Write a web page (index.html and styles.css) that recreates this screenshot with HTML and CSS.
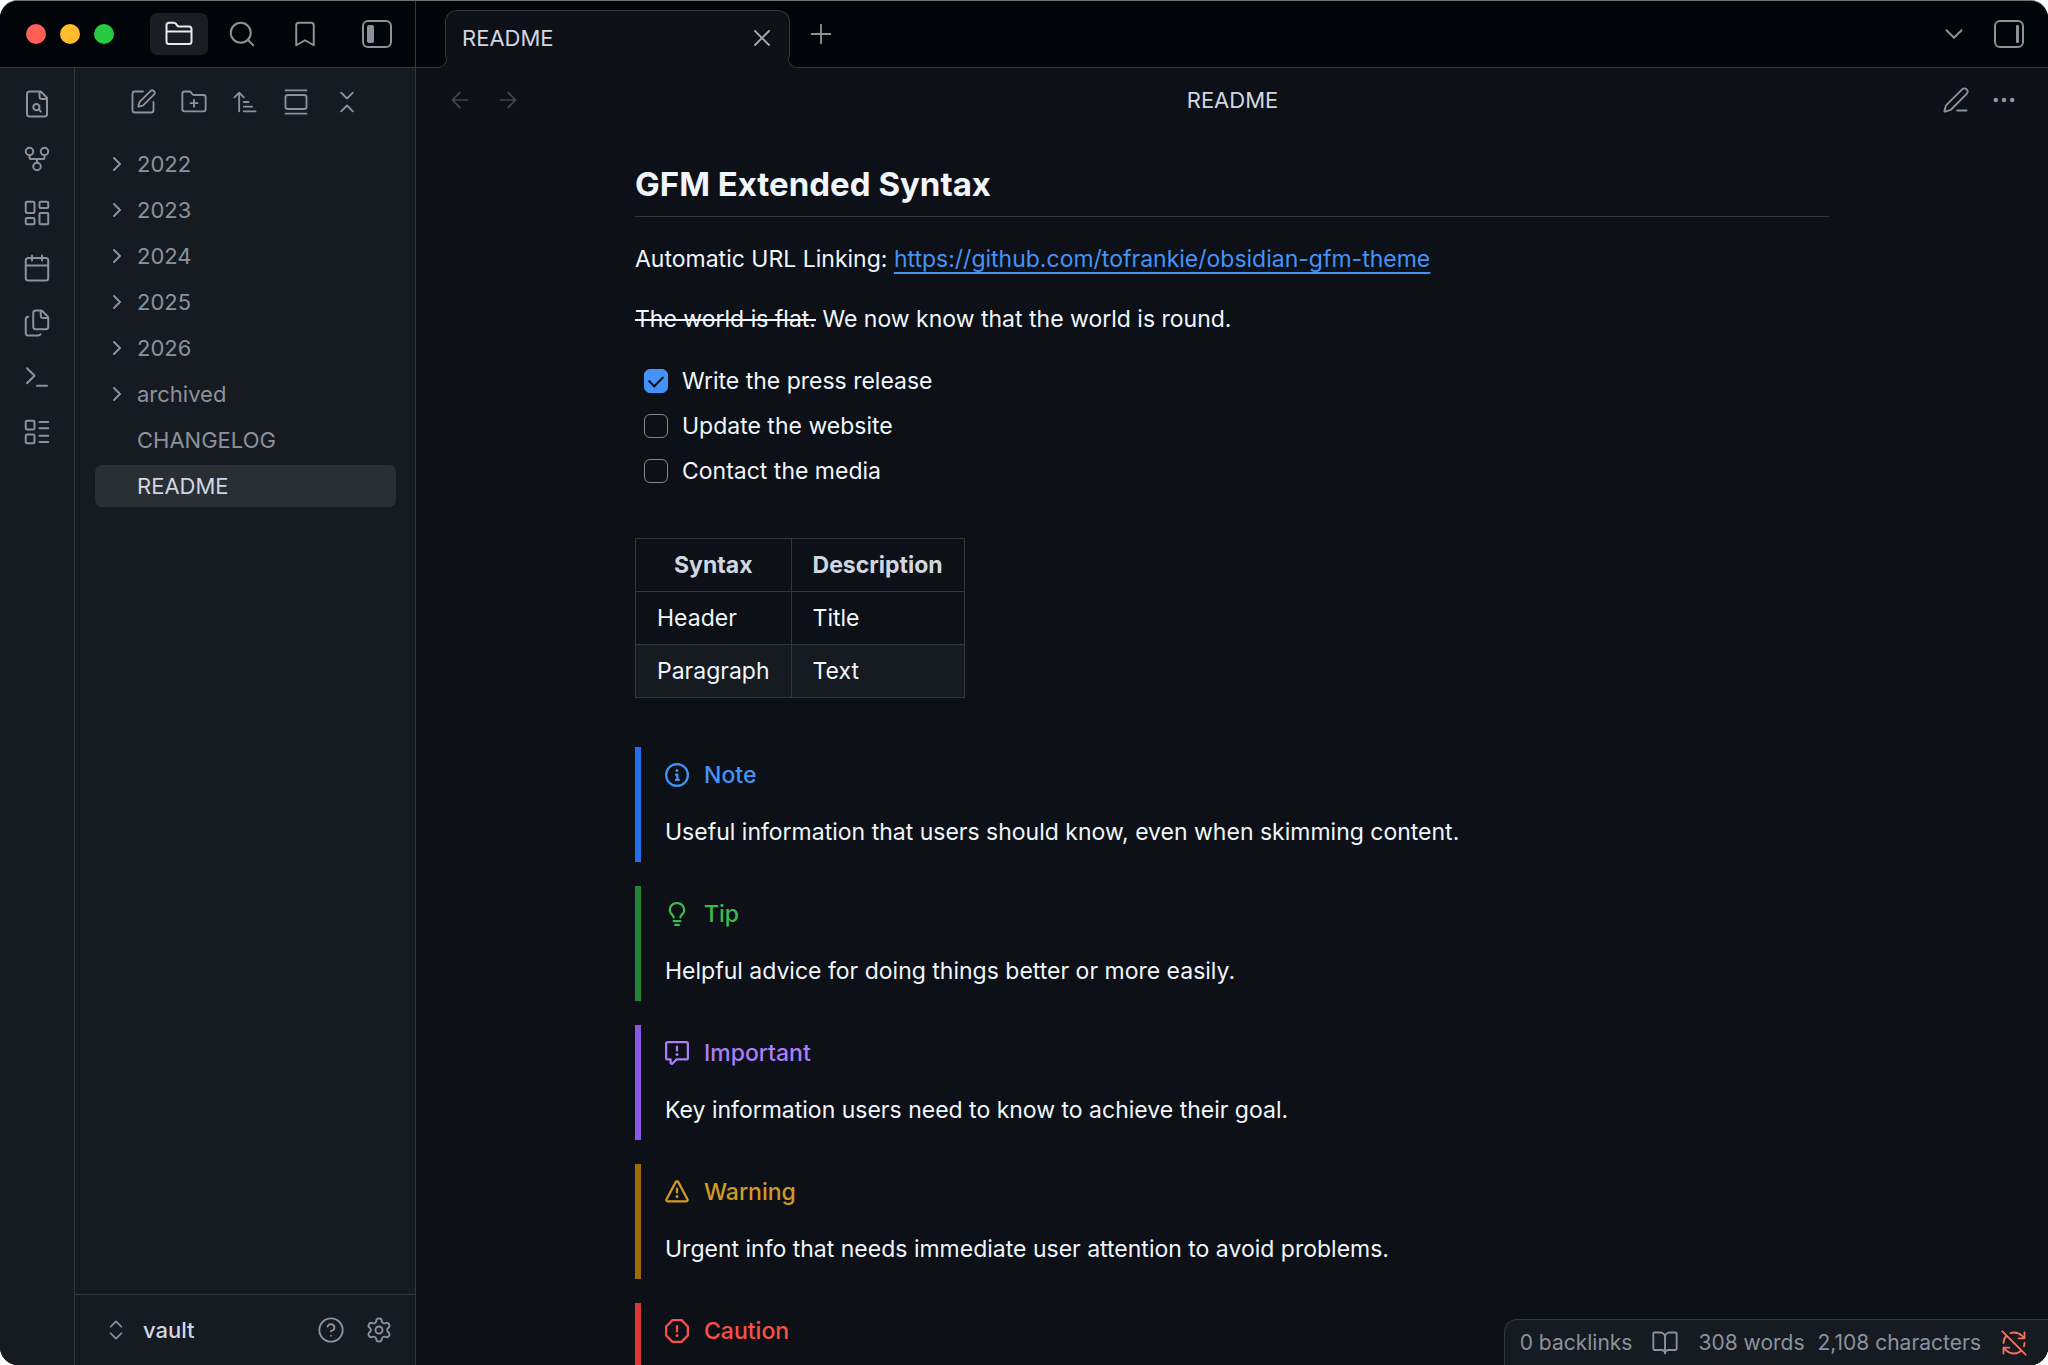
FILE: index.html
```html
<!DOCTYPE html>
<html lang="en">
<head>
<meta charset="utf-8">
<title>README - vault</title>
<link rel="stylesheet" href="styles.css">
</head>
<body>
<svg class="sprite" aria-hidden="true">
  <symbol id="folder" viewBox="0 0 24 24"><path d="M20 20a2 2 0 0 0 2-2V8a2 2 0 0 0-2-2h-7.900a2 2 0 0 1-1.690-.9L9.600 3.900A2 2 0 0 0 7.930 3H4a2 2 0 0 0-2 2v13a2 2 0 0 0 2 2ZM2 10h20"/></symbol>
  <symbol id="search" viewBox="0 0 24 24"><circle cx="11" cy="11" r="8"/><path d="m21 21-4.300-4.300"/></symbol>
  <symbol id="bookmark" viewBox="0 0 24 24"><path d="m19 21-7-4-7 4V5a2 2 0 0 1 2-2h10a2 2 0 0 1 2 2z"/></symbol>
  <symbol id="panel-left" viewBox="0 0 32 30"><rect x="2" y="2" width="28" height="26" rx="5"/><rect class="solid" x="6" y="6" width="7" height="18" rx="2"/></symbol>
  <symbol id="panel-right" viewBox="0 0 32 30"><rect x="2" y="2" width="28" height="26" rx="5"/><rect class="solid" x="23" y="6" width="3" height="18" rx="1"/></symbol>
  <symbol id="file-search" viewBox="0 0 24 24"><path d="M15 2H6a2 2 0 0 0-2 2v16a2 2 0 0 0 2 2h12a2 2 0 0 0 2-2V7ZM14 2v4a2 2 0 0 0 2 2h4M13.300 16.300 15 18"/><circle cx="11.500" cy="14.500" r="2.500"/></symbol>
  <symbol id="graph" viewBox="0 0 24 24"><circle cx="12" cy="18" r="3"/><circle cx="6" cy="6" r="3"/><circle cx="18" cy="6" r="3"/><path d="M18 9v2c0 .6-.4 1-1 1H7c-.6 0-1-.4-1-1V9M12 12v3"/></symbol>
  <symbol id="dashboard" viewBox="0 0 24 24"><rect x="3" y="3" width="7" height="9" rx="1"/><rect x="14" y="3" width="7" height="5" rx="1"/><rect x="14" y="12" width="7" height="9" rx="1"/><rect x="3" y="16" width="7" height="5" rx="1"/></symbol>
  <symbol id="calendar" viewBox="0 0 24 24"><path d="M8 2v4M16 2v4M3 10h18"/><rect x="3" y="4" width="18" height="18" rx="2"/></symbol>
  <symbol id="files" viewBox="0 0 24 24"><path d="M15 2a2 2 0 0 1 1.414.586l4 4A2 2 0 0 1 21 8v7a2 2 0 0 1-2 2h-8a2 2 0 0 1-2-2V4a2 2 0 0 1 2-2zM15 2v4a2 2 0 0 0 2 2h4M5 7a2 2 0 0 0-2 2v11a2 2 0 0 0 2 2h8a2 2 0 0 0 1.732-1"/></symbol>
  <symbol id="terminal" viewBox="0 0 24 24"><path d="m4 17 6-6-6-6M12 19h8"/></symbol>
  <symbol id="list" viewBox="0 0 24 24"><rect x="3" y="3" width="7" height="7" rx="1"/><rect x="3" y="14" width="7" height="7" rx="1"/><path d="M14 4h7M14 9h7M14 15h7M14 20h7"/></symbol>
  <symbol id="new-note" viewBox="0 0 24 24"><path d="M12 3H5a2 2 0 0 0-2 2v14a2 2 0 0 0 2 2h14a2 2 0 0 0 2-2v-7M18.375 2.625a1 1 0 0 1 3 3l-9.013 9.014a2 2 0 0 1-.853.505l-2.873.84a.5.5 0 0 1-.62-.62l.84-2.873a2 2 0 0 1 .506-.852z"/></symbol>
  <symbol id="new-folder" viewBox="0 0 24 24"><path d="M12 10v6M9 13h6M20 20a2 2 0 0 0 2-2V8a2 2 0 0 0-2-2h-7.900a2 2 0 0 1-1.690-.9L9.600 3.900A2 2 0 0 0 7.930 3H4a2 2 0 0 0-2 2v13a2 2 0 0 0 2 2Z"/></symbol>
  <symbol id="sort" viewBox="0 0 24 24"><path d="m3 8 4-4 4 4M7 4v16M11 12h4M11 16h7M11 20h10"/></symbol>
  <symbol id="gallery" viewBox="0 0 24 24"><path d="M3 2h18M3 22h18"/><rect x="3" y="6" width="18" height="12" rx="2"/></symbol>
  <symbol id="collapse" viewBox="0 0 24 24"><path d="m7 20 5-5 5 5M7 4l5 5 5-5"/></symbol>
  <symbol id="expand" viewBox="0 0 24 24"><path d="m7 15 5 5 5-5M7 9l5-5 5 5"/></symbol>
  <symbol id="chevron-right" viewBox="0 0 24 24"><path d="m9 18 6-6-6-6"/></symbol>
  <symbol id="chevron-down" viewBox="0 0 24 24"><path d="m6 9 6 6 6-6"/></symbol>
  <symbol id="close" viewBox="0 0 24 24"><path d="M18 6 6 18M6 6l12 12"/></symbol>
  <symbol id="plus" viewBox="0 0 24 24"><path d="M4 12h16M12 4v16"/></symbol>
  <symbol id="arrow-left" viewBox="0 0 24 24"><path d="m12 19-7-7 7-7M19 12H5"/></symbol>
  <symbol id="arrow-right" viewBox="0 0 24 24"><path d="M5 12h14M12 5l7 7-7 7"/></symbol>
  <symbol id="pen" viewBox="0 0 24 24"><path d="M13 21h8M21.174 6.812a1 1 0 0 0-3.986-3.987L3.842 16.174a2 2 0 0 0-.5.83l-1.321 4.352a.5.5 0 0 0 .623.622l4.353-1.320a2 2 0 0 0 .83-.497z"/></symbol>
  <symbol id="more" viewBox="0 0 24 24"><circle cx="12" cy="12" r="1"/><circle cx="19" cy="12" r="1"/><circle cx="5" cy="12" r="1"/></symbol>
  <symbol id="help" viewBox="0 0 24 24"><circle cx="12" cy="12" r="10"/><path d="M9.090 9a3 3 0 0 1 5.830 1c0 2-3 3-3 3M12 17h.01"/></symbol>
  <symbol id="settings" viewBox="0 0 24 24"><path d="M9.671 4.136a2.340 2.340 0 0 1 4.659 0 2.340 2.340 0 0 0 3.319 1.915 2.340 2.340 0 0 1 2.330 4.033 2.340 2.340 0 0 0 0 3.831 2.340 2.340 0 0 1-2.330 4.033 2.340 2.340 0 0 0-3.319 1.915 2.340 2.340 0 0 1-4.659 0 2.340 2.340 0 0 0-3.320-1.915 2.340 2.340 0 0 1-2.330-4.033 2.340 2.340 0 0 0 0-3.831A2.340 2.340 0 0 1 6.350 6.051a2.340 2.340 0 0 0 3.319-1.915"/><circle cx="12" cy="12" r="3"/></symbol>
  <symbol id="book" viewBox="0 0 24 24"><path d="M12 7v14M3 18a1 1 0 0 1-1-1V4a1 1 0 0 1 1-1h5a4 4 0 0 1 4 4 4 4 0 0 1 4-4h5a1 1 0 0 1 1 1v13a1 1 0 0 1-1 1h-6a3 3 0 0 0-3 3 3 3 0 0 0-3-3z"/></symbol>
  <symbol id="sync-off" viewBox="0 0 24 24"><path d="M21 8l-2.260-2.260A9.750 9.750 0 0 0 12 3c-1 0-1.970.16-2.870.47M8 16H3v5M3 12c0-2.490 1-4.740 2.640-6.360M3 16l2.260 2.260A9.750 9.750 0 0 0 12 21c2.490 0 4.740-1 6.360-2.640M21 12c0 1-.16 1.970-.47 2.870M21 3v5h-5M22 22 2 2"/></symbol>
  <symbol id="note" viewBox="0 0 16 16"><path d="M0 8a8 8 0 1 1 16 0A8 8 0 0 1 0 8Zm8-6.500a6.500 6.500 0 1 0 0 13 6.500 6.500 0 0 0 0-13ZM6.500 7.750A.75.75 0 0 1 7.250 7h1a.75.75 0 0 1 .75.75v2.750h.25a.75.75 0 0 1 0 1.500h-2a.75.75 0 0 1 0-1.500h.25v-2h-.25a.75.75 0 0 1-.75-.75ZM8 6a1 1 0 1 1 0-2 1 1 0 0 1 0 2Z"/></symbol>
  <symbol id="tip" viewBox="0 0 16 16"><path d="M8 1.500c-2.363 0-4 1.690-4 3.750 0 .984.424 1.625.984 2.304l.214.253c.223.264.47.556.673.848.284.411.537.896.621 1.490a.75.75 0 0 1-1.484.211c-.04-.282-.163-.547-.37-.847a8.456 8.456 0 0 0-.542-.68c-.084-.1-.173-.205-.268-.32C3.201 7.750 2.500 6.766 2.500 5.250 2.500 2.310 4.863 0 8 0s5.500 2.310 5.500 5.250c0 1.516-.701 2.500-1.328 3.259-.095.115-.184.220-.268.319-.207.245-.383.453-.541.681-.208.300-.330.565-.370.847a.751.751 0 0 1-1.485-.212c.084-.593.337-1.078.621-1.489.203-.292.450-.584.673-.848.075-.088.147-.173.213-.253.561-.679.985-1.320.985-2.304 0-2.060-1.637-3.750-4-3.750ZM5.750 12h4.500a.75.75 0 0 1 0 1.500h-4.500a.75.75 0 0 1 0-1.500ZM6 15.250a.75.75 0 0 1 .75-.75h2.500a.75.75 0 0 1 0 1.500h-2.500a.75.75 0 0 1-.75-.75Z"/></symbol>
  <symbol id="important" viewBox="0 0 16 16"><path d="M0 1.750C0 .784.784 0 1.750 0h12.500C15.216 0 16 .784 16 1.750v9.500A1.750 1.750 0 0 1 14.250 13H8.060l-2.573 2.573A1.458 1.458 0 0 1 3 14.543V13H1.750A1.750 1.750 0 0 1 0 11.250Zm1.750-.25a.25.25 0 0 0-.25.25v9.500c0 .138.112.25.25.25h2a.75.75 0 0 1 .75.75v2.190l2.720-2.720a.749.749 0 0 1 .53-.22h6.500a.25.25 0 0 0 .25-.25v-9.500a.25.25 0 0 0-.25-.25Zm7 2.250v2.500a.75.75 0 0 1-1.500 0v-2.500a.75.75 0 0 1 1.500 0ZM9 9a1 1 0 1 1-2 0 1 1 0 0 1 2 0Z"/></symbol>
  <symbol id="warning" viewBox="0 0 16 16"><path d="M6.457 1.047c.659-1.234 2.427-1.234 3.086 0l6.082 11.378A1.750 1.750 0 0 1 14.082 15H1.918a1.750 1.750 0 0 1-1.543-2.575Zm1.763.707a.25.25 0 0 0-.44 0L1.698 13.132a.25.25 0 0 0 .22.368h12.164a.25.25 0 0 0 .22-.368Zm.53 3.996v2.500a.75.75 0 0 1-1.500 0v-2.500a.75.75 0 0 1 1.500 0ZM9 11a1 1 0 1 1-2 0 1 1 0 0 1 2 0Z"/></symbol>
  <symbol id="caution" viewBox="0 0 16 16"><path d="M4.470.22A.749.749 0 0 1 5 0h6c.199 0 .389.079.53.22l4.250 4.250c.141.140.220.331.220.530v6a.749.749 0 0 1-.22.53l-4.250 4.250A.749.749 0 0 1 11 16H5a.749.749 0 0 1-.53-.22L.22 11.530A.749.749 0 0 1 0 11V5c0-.199.079-.389.22-.53Zm.84 1.280L1.500 5.310v5.380l3.810 3.810h5.380l3.810-3.810V5.310L10.690 1.500ZM8 4a.75.75 0 0 1 .75.75v3.500a.75.75 0 0 1-1.500 0v-3.500A.75.75 0 0 1 8 4Zm0 8a1 1 0 1 1 0-2 1 1 0 0 1 0 2Z"/></symbol>
</svg>

<div class="window">
  <header class="titlebar">
    <div class="titlebar-left">
      <div class="lights"><span class="light red"></span><span class="light yellow"></span><span class="light green"></span></div>
      <button class="side-tab active" aria-label="Files"><svg class="icon"><use href="#folder"/></svg></button>
      <button class="side-tab" aria-label="Search"><svg class="icon"><use href="#search"/></svg></button>
      <button class="side-tab" aria-label="Bookmarks"><svg class="icon"><use href="#bookmark"/></svg></button>
      <button class="toggle" aria-label="Toggle left sidebar"><svg class="panel-icon"><use href="#panel-left"/></svg></button>
    </div>
    <div class="tabs">
      <div class="tab"><span>README</span><button aria-label="Close tab"><svg class="icon medium"><use href="#close"/></svg></button></div>
      <button class="new-tab" aria-label="New tab"><svg class="icon medium"><use href="#plus"/></svg></button>
      <div class="tabs-end">
        <button aria-label="Tab list"><svg class="icon"><use href="#chevron-down"/></svg></button>
        <button aria-label="Toggle right sidebar"><svg class="panel-icon"><use href="#panel-right"/></svg></button>
      </div>
    </div>
  </header>

  <div class="workspace">
    <nav class="ribbon" aria-label="Ribbon">
      <button aria-label="Quick switcher"><svg class="icon"><use href="#file-search"/></svg></button>
      <button aria-label="Graph view"><svg class="icon"><use href="#graph"/></svg></button>
      <button aria-label="Canvas"><svg class="icon"><use href="#dashboard"/></svg></button>
      <button aria-label="Daily note"><svg class="icon"><use href="#calendar"/></svg></button>
      <button aria-label="Templates"><svg class="icon"><use href="#files"/></svg></button>
      <button aria-label="Command palette"><svg class="icon"><use href="#terminal"/></svg></button>
      <button aria-label="Bases"><svg class="icon"><use href="#list"/></svg></button>
    </nav>

    <aside class="sidebar">
      <div class="nav-buttons">
        <button aria-label="New note"><svg class="icon medium"><use href="#new-note"/></svg></button>
        <button aria-label="New folder"><svg class="icon medium"><use href="#new-folder"/></svg></button>
        <button aria-label="Sort order"><svg class="icon medium"><use href="#sort"/></svg></button>
        <button aria-label="Reveal current file"><svg class="icon medium"><use href="#gallery"/></svg></button>
        <button aria-label="Collapse all"><svg class="icon medium"><use href="#collapse"/></svg></button>
      </div>
      <div class="files">
        <button class="file"><svg class="icon chevron"><use href="#chevron-right"/></svg>2022</button>
        <button class="file"><svg class="icon chevron"><use href="#chevron-right"/></svg>2023</button>
        <button class="file"><svg class="icon chevron"><use href="#chevron-right"/></svg>2024</button>
        <button class="file"><svg class="icon chevron"><use href="#chevron-right"/></svg>2025</button>
        <button class="file"><svg class="icon chevron"><use href="#chevron-right"/></svg>2026</button>
        <button class="file"><svg class="icon chevron"><use href="#chevron-right"/></svg>archived</button>
        <button class="file note">CHANGELOG</button>
        <button class="file note current">README</button>
      </div>
      <div class="vault">
        <button class="vault-name"><svg class="icon small"><use href="#expand"/></svg>vault</button>
        <button aria-label="Help"><svg class="icon medium"><use href="#help"/></svg></button>
        <button aria-label="Settings"><svg class="icon medium"><use href="#settings"/></svg></button>
      </div>
    </aside>

    <main class="main">
      <div class="view-header">
        <div class="history">
          <button aria-label="Back"><svg class="icon small"><use href="#arrow-left"/></svg></button>
          <button aria-label="Forward"><svg class="icon small"><use href="#arrow-right"/></svg></button>
        </div>
        <div class="view-title">README</div>
        <div class="view-actions">
          <button aria-label="Edit"><svg class="icon medium"><use href="#pen"/></svg></button>
          <button aria-label="More options"><svg class="icon medium dots"><use href="#more"/></svg></button>
        </div>
      </div>

      <article class="document">
        <h2>GFM Extended Syntax</h2>
        <p>Automatic URL Linking: <a href="https://github.com/tofrankie/obsidian-gfm-theme">https://github.com/tofrankie/obsidian-gfm-theme</a></p>
        <p><del>The world is flat.</del> We now know that the world is round.</p>
        <ul class="tasks">
          <li><label><input type="checkbox" checked>Write the press release</label></li>
          <li><label><input type="checkbox">Update the website</label></li>
          <li><label><input type="checkbox">Contact the media</label></li>
        </ul>
        <table>
          <thead><tr><th>Syntax</th><th>Description</th></tr></thead>
          <tbody>
            <tr><td>Header</td><td>Title</td></tr>
            <tr><td>Paragraph</td><td>Text</td></tr>
          </tbody>
        </table>
        <section class="callout note-callout"><h3><svg class="octicon"><use href="#note"/></svg>Note</h3><p>Useful information that users should know, even when skimming content.</p></section>
        <section class="callout tip-callout"><h3><svg class="octicon"><use href="#tip"/></svg>Tip</h3><p>Helpful advice for doing things better or more easily.</p></section>
        <section class="callout important-callout"><h3><svg class="octicon"><use href="#important"/></svg>Important</h3><p>Key information users need to know to achieve their goal.</p></section>
        <section class="callout warning-callout"><h3><svg class="octicon"><use href="#warning"/></svg>Warning</h3><p>Urgent info that needs immediate user attention to avoid problems.</p></section>
        <section class="callout caution-callout"><h3><svg class="octicon"><use href="#caution"/></svg>Caution</h3></section>
      </article>

      <footer class="status">
        <span>0 backlinks</span>
        <svg class="icon medium"><use href="#book"/></svg>
        <span class="words">308 words</span>
        <span>2,108 characters</span>
        <svg class="icon medium sync"><use href="#sync-off"/></svg>
      </footer>
    </main>
  </div>
</div>
</body>
</html>
```
FILE: styles.css
```css
:root {
  --inset: #010409;
  --panel: #161b22;
  --page: #0d1117;
  --line: #33383e;
  --hover: #2a2f34;
  --text: #f0f6fc;
  --text-soft: #d1d7e0;
  --muted: #8c929b;
  --accent: #4493f8;
}

* { box-sizing: border-box; }

body {
  margin: 0;
  background: #fff;
  color: var(--text);
  font-family: Inter, "Liberation Sans", sans-serif;
  font-size: 23px;
  line-height: 36px;
}

button {
  display: flex;
  align-items: center;
  justify-content: center;
  padding: 0;
  border: 0;
  background: none;
  color: inherit;
  font: inherit;
}

.sprite { position: absolute; width: 0; height: 0; }

.icon, .panel-icon {
  display: block;
  flex: none;
  fill: none;
  stroke: currentColor;
  stroke-width: 1.6;
  stroke-linecap: round;
  stroke-linejoin: round;
}
.icon { width: 30px; height: 30px; }
.icon.medium { width: 28px; height: 28px; }
.icon.small { width: 26px; height: 26px; }
.panel-icon { width: 32px; height: 30px; stroke-width: 2; }
.solid { fill: currentColor; stroke: none; }
.octicon { width: 24px; height: 24px; fill: currentColor; }

.window {
  display: flex;
  flex-direction: column;
  height: 100vh;
  overflow: hidden;
  border-top: 1px solid #6b7078;
  border-radius: 18px;
  background: var(--page);
}

/* Title bar */
.titlebar {
  display: flex;
  flex: none;
  height: 67px;
  border-bottom: 1px solid var(--line);
  background: var(--inset);
  color: var(--muted);
}
.titlebar-left {
  display: flex;
  align-items: center;
  width: 416px;
  padding-left: 26px;
  border-right: 1px solid var(--line);
}
.lights { display: flex; gap: 14px; margin-right: 36px; }
.light { width: 20px; height: 20px; border-radius: 50%; }
.red { background: #ff5f57; }
.yellow { background: #febc2e; }
.green { background: #28c840; }
.side-tab { width: 58px; height: 42px; margin-right: 5px; border-radius: 7px; }
.side-tab.active { background: #1a1e24; color: #e6e9ee; }
.toggle { margin-left: 22px; }

.tabs { display: flex; flex: 1; align-items: center; padding-left: 29px; }
.tab {
  position: relative;
  display: flex;
  align-self: flex-end;
  align-items: center;
  justify-content: space-between;
  width: 345px;
  height: 58px;
  margin-bottom: -1px;
  padding: 0 13px 3px 16px;
  border: 1px solid var(--line);
  border-bottom: 0;
  border-radius: 12px 12px 0 0;
  background: var(--page);
  color: var(--text-soft);
  font-size: 22px;
}
/* Outward curves that join the tab to the bar's lower edge */
.tab::before, .tab::after {
  content: "";
  position: absolute;
  bottom: 0;
  width: 10px;
  height: 10px;
  border-bottom: 1px solid var(--line);
  background: var(--inset);
  box-shadow: 0 0 0 5px var(--page);
  clip-path: inset(0);
}
.tab::before { left: -10px; border-right: 1px solid var(--line); border-bottom-right-radius: 9px; }
.tab::after { right: -10px; border-left: 1px solid var(--line); border-bottom-left-radius: 9px; }
.tab button { color: #a5abb3; }
.new-tab { margin-left: 17px; }
.tabs-end { display: flex; align-items: center; gap: 24px; margin-left: auto; padding-right: 23px; }

/* Panels */
.workspace {
  display: flex;
  flex: 1;
  min-height: 0;
  background: linear-gradient(90deg, var(--panel) 74px, var(--page) 74px);
}
.ribbon {
  display: grid;
  flex: none;
  grid-template-rows: repeat(7, 1fr);
  width: 74px;
  height: 382px;
  margin-top: 9px;
  color: var(--muted);
}
.sidebar {
  display: flex;
  flex: none;
  flex-direction: column;
  width: 342px;
  border: solid var(--line);
  border-width: 0 1px;
  background: var(--panel);
  color: var(--muted);
  font-size: 22px;
}
.nav-buttons { display: flex; justify-content: center; gap: 23px; padding: 20px 0 27px; }
.files { display: flex; flex: 1; flex-direction: column; gap: 4px; padding: 0 19px 0 20px; }
.file {
  justify-content: flex-start;
  height: 42px;
  padding-left: 10px;
  border-radius: 7px;
}
.file.note { padding-left: 42px; }
.file.current { background: var(--hover); color: var(--text-soft); }
.icon.chevron { width: 24px; height: 24px; margin-right: 8px; stroke-width: 2; }
.vault {
  display: flex;
  align-items: center;
  gap: 20px;
  height: 71px;
  padding: 0 22px 0 28px;
  border-top: 1px solid var(--line);
}
.vault-name { flex: 1; justify-content: flex-start; gap: 14px; color: var(--text-soft); font-weight: 500; }
.vault-name .icon { color: var(--muted); }

/* Document view */
.main { position: relative; flex: 1; min-width: 0; overflow: hidden; background: var(--page); }
.view-header {
  display: grid;
  grid-template-columns: 1fr auto 1fr;
  align-items: center;
  height: 63px;
  padding: 0 30px 0 31px;
  color: var(--muted);
  font-size: 22px;
}
.history { display: flex; gap: 22px; color: #42474e; }
.view-title { color: var(--text-soft); }
.view-actions { display: flex; justify-content: flex-end; gap: 20px; }
.dots { stroke-width: 2; }

.document { max-width: 1194px; margin: 0 auto; padding-top: 28px; }
.document h2 {
  margin: 0 0 24px;
  padding-bottom: 7px;
  border-bottom: 1px solid var(--line);
  font-size: 33px;
  font-weight: 700;
  line-height: 50px;
}
.document p { margin: 0 0 24px; }
.document a {
  color: var(--accent);
  text-decoration: underline;
  text-decoration-thickness: 2px;
  text-underline-offset: 5px;
  text-decoration-skip-ink: none;
}
.document del { text-decoration-thickness: 2px; }
.tasks { display: grid; gap: 9px; margin: 26px 0 0; padding: 0 0 0 9px; list-style: none; }
.tasks label { display: flex; align-items: center; gap: 14px; }
.tasks input {
  appearance: none;
  display: grid;
  place-items: center;
  width: 24px;
  height: 24px;
  margin: 0;
  border: 1px solid #858a91;
  border-radius: 6px;
}
.tasks input:checked { border-color: var(--accent); background: var(--accent); }
.tasks input:checked::before {
  content: "";
  width: 12px;
  height: 7px;
  margin-bottom: 4px;
  border: solid var(--page);
  border-width: 0 0 2px 2px;
  rotate: -45deg;
}

table { margin: 49px 0; border-collapse: collapse; }
th, td { padding: 8px 21px; border: 1px solid var(--line); text-align: left; }
th { color: var(--text-soft); font-weight: 700; text-align: center; }
tbody tr:nth-child(even) { background: var(--panel); }

.callout { height: 115px; margin-bottom: 24px; padding: 10px 0 0 24px; border-left: 6px solid; }
.callout h3 { display: flex; align-items: center; gap: 15px; margin: 0 0 21px; font-size: 23px; font-weight: 500; }
.callout p { margin: 0; }
.note-callout { border-color: #1f6feb; }
.note-callout h3 { color: #4493f8; }
.tip-callout { border-color: #238636; }
.tip-callout h3 { color: #3fb950; }
.important-callout { border-color: #8957e5; }
.important-callout h3 { color: #ab7df8; }
.warning-callout { border-color: #9e6a03; }
.warning-callout h3 { color: #d29922; }
.caution-callout { border-color: #da3633; }
.caution-callout h3 { color: #f85149; }

/* Status bar floats over the end of the document */
.status {
  position: absolute;
  right: 0;
  bottom: 0;
  display: flex;
  align-items: center;
  height: 46px;
  padding: 0 20px 0 15px;
  border: solid var(--line);
  border-width: 1px 0 0 1px;
  border-radius: 13px 0 0 0;
  background: var(--panel);
  color: var(--muted);
  font-size: 21px;
}
.status .icon { margin: 0 19px; }
.status .words { margin-right: 13px; }
.status .sync { margin-right: 0; color: #f4705f; }
```
